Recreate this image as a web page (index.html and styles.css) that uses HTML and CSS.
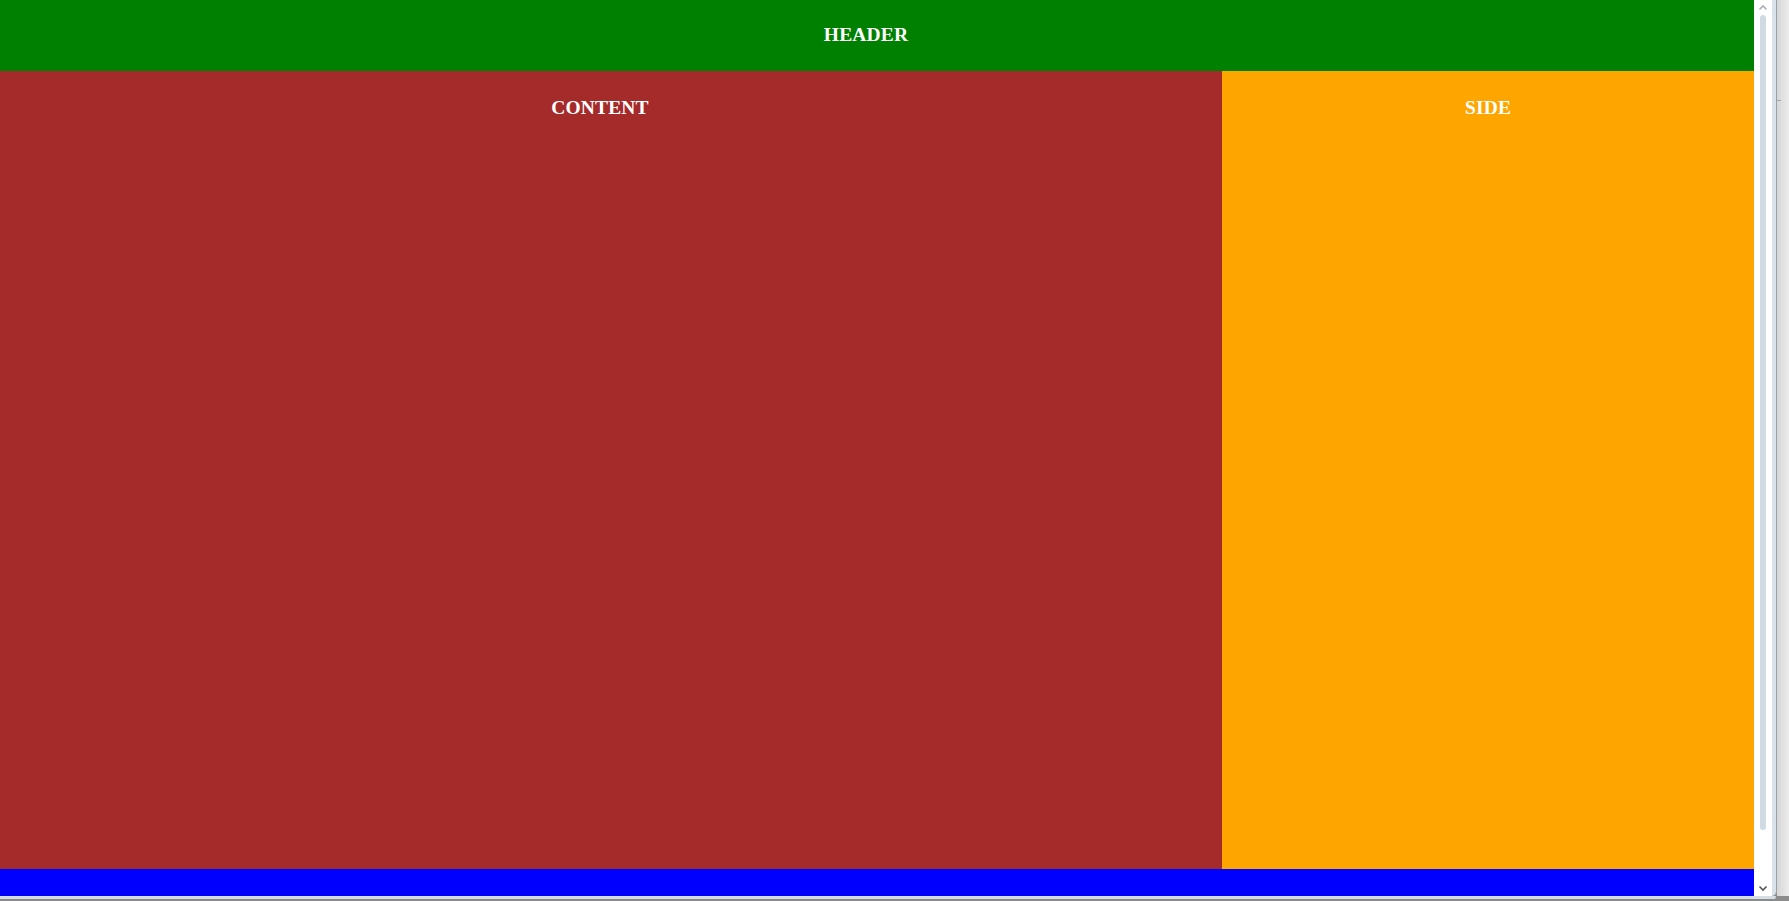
FILE: index.html
```html
<!DOCTYPE html>
<html>
<head>
<meta charset="utf-8">
<title>Layout</title>
<link rel="stylesheet" href="styles.css">
</head>
<body>
<div class="window">
  <div class="frame">
    <div class="page">
      <header class="header"><h3 class="title">HEADER</h3></header>
      <div class="main">
        <section class="content"><h3 class="title">CONTENT</h3></section>
        <aside class="side"><h3 class="title">SIDE</h3></aside>
      </div>
      <footer class="footer"></footer>
    </div>
    <div class="scrollbar">
      <svg class="arrow" width="10" height="7" viewBox="0 0 10 7"><path d="M1.5 5.5 L5 2 L8.5 5.5" fill="none" stroke="#a9b1b8" stroke-width="1.6"/></svg>
      <div class="track"><div class="thumb"></div></div>
      <svg class="arrow" width="10" height="7" viewBox="0 0 10 7"><path d="M1.5 1.5 L5 5 L8.5 1.5" fill="none" stroke="#555" stroke-width="1.6"/></svg>
    </div>
    <div class="edge"></div>
    <div class="outside"><span class="tick tick-a"></span></div>
  </div>
  <div class="bottom"></div>
</div>
</body>
</html>
```
FILE: styles.css
```css
html, body {
  margin: 0;
  padding: 0;
  height: 100%;
  overflow: hidden;
}
body {
  font-family: "Liberation Serif", "Times New Roman", serif;
  background: #8c8c8c;
}
.window {
  display: flex;
  flex-direction: column;
  height: 901px;
  width: 1789px;
}
.frame {
  display: flex;
  height: 896px;
}
.page {
  width: 1754px;
  display: flex;
  flex-direction: column;
}
.title {
  margin: 0;
  font-size: 19.5px;
  font-weight: bold;
  color: #fff;
  line-height: 22px;
  letter-spacing: 0.15px;
}
.header {
  height: 71px;
  background: #008000;
  display: flex;
  align-items: center;
  justify-content: center;
  padding: 0 22px 2px 0;
  box-sizing: border-box;
}
.main {
  display: flex;
  height: 798px;
}
.content {
  width: 1222px;
  background: #a52a2a;
  text-align: center;
  padding: 26px 22px 0 0;
  box-sizing: border-box;
}
.side {
  flex: 1;
  background: #ffa500;
  text-align: center;
  padding-top: 26px;
  box-sizing: border-box;
}
.footer {
  height: 27px;
  background: #0000ff;
}
.scrollbar {
  width: 18px;
  background: #fff;
  display: flex;
  flex-direction: column;
  align-items: center;
  padding: 4px 0 4px;
  box-sizing: border-box;
}
.arrow {
  flex: none;
}
.track {
  flex: 1;
  width: 6px;
  padding: 4px 0 55px;
  box-sizing: border-box;
  display: flex;
}
.thumb {
  flex: 1;
  background: #d0dae3;
  border-radius: 3px;
}
.edge {
  width: 4px;
  background: #d9e2ea;
  border-right: 1px solid #9aa0a6;
  border-bottom-right-radius: 8px;
}
.outside {
  flex: 1;
  background: linear-gradient(to right, #d6d6d6, #ececec);
  position: relative;
}
.tick {
  position: absolute;
  left: 0;
  width: 4px;
  height: 1px;
  background: #a8a8a8;
}
.tick-a {
  top: 100px;
}
.bottom {
  height: 5px;
  width: 1776px;
  border-top: 3px solid #d5dde5;
  background: #8a8a8a;
  box-sizing: border-box;
  border-bottom-right-radius: 6px;
}
```
